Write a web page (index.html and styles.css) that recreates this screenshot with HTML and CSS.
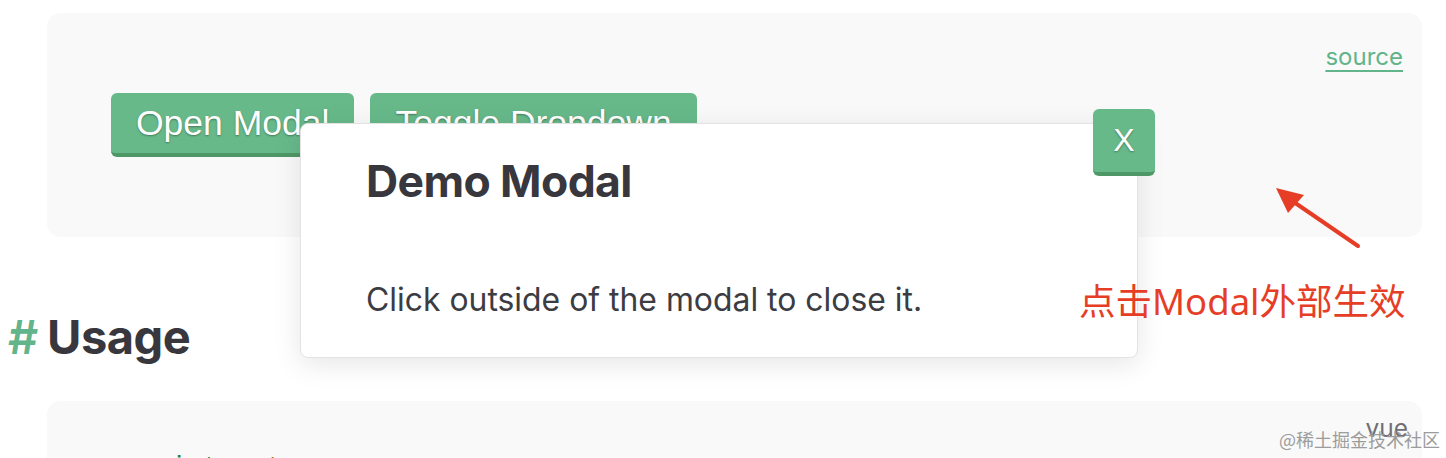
FILE: index.html
```html
<!DOCTYPE html>
<html lang="zh">
<head>
<meta charset="utf-8">
<title>Modal demo</title>
<link rel="stylesheet" href="styles.css">
</head>
<body>
<div class="page">
  <div class="demo">
    <div class="source-row"><a class="source" href="#">source</a></div>
    <div class="btn-row">
      <button class="btn">Open Modal</button>
      <button class="btn">Toggle Dropdown</button>
    </div>
    <div class="modal">
      <h3 class="modal-title">Demo Modal</h3>
      <p class="modal-body">Click outside of the modal to close it.</p>
      <button class="btn close">X</button>
    </div>
    <svg class="arrow" width="120" height="90" viewBox="0 0 120 90">
      <line x1="110" y1="70" x2="40" y2="22" stroke="#e63e26" stroke-width="4" stroke-linecap="round"/>
      <polygon points="28,12 56,19 40,37" fill="#e63e26"/>
    </svg>
    <div class="note">点击Modal外部生效</div>
  </div>
  <h2 class="heading"><span class="hash">#</span>Usage</h2>
  <div class="code-box">
    <span class="lang">vue</span>
    <pre class="code"><span class="tag">&lt;script</span> <span class="attr">setup</span><span class="tag">&gt;</span></pre>
  </div>
</div>
<div class="watermark">@稀土掘金技术社区</div>
</body>
</html>
```
FILE: styles.css
```css
html, body {
  margin: 0;
  padding: 0;
  background: #ffffff;
  overflow: hidden;
}
body {
  font-family: Inter, "Noto Sans", "Noto Sans CJK SC", sans-serif;
  color: #3c3c43;
  width: 1446px;
  height: 458px;
  position: relative;
}
.page {
  padding: 13px 24px 0 47px;
}
.demo {
  position: relative;
  height: 224px;
  box-sizing: border-box;
  background: #f9f9f9;
  border-radius: 14px;
  padding: 30px 19px 0 64px;
}
.source-row {
  display: flex;
  justify-content: flex-end;
  height: 50px;
}
.source {
  font-size: 24px;
  line-height: 28px;
  color: #62b48a;
  text-decoration: underline;
  text-decoration-thickness: 2px;
  text-underline-offset: 5px;
}
.btn-row {
  display: flex;
  gap: 16px;
}
.btn {
  font-family: "Liberation Sans", Arial, sans-serif;
  font-size: 35.5px;
  color: #ffffff;
  background: #67b98a;
  border: none;
  border-bottom: 4px solid #4f9766;
  border-radius: 6px;
  height: 64px;
  padding: 0 25px;
  text-shadow: 0 1px 2px rgba(0, 0, 0, 0.35);
  cursor: pointer;
}
.modal {
  position: absolute;
  left: 253px;
  top: 110px;
  width: 838px;
  height: 235px;
  box-sizing: border-box;
  background: #ffffff;
  border: 1px solid #e3e3e3;
  border-radius: 8px;
  box-shadow: 0 6px 28px rgba(0, 0, 0, 0.10);
  padding: 29px 40px 0 65px;
  z-index: 2;
}
.modal-title {
  margin: 0;
  font-size: 44.5px;
  line-height: 56px;
  font-weight: 700;
  color: #37373d;
  letter-spacing: -0.6px;
}
.modal-body {
  margin: 71px 0 0;
  font-size: 31.9px;
  line-height: 40px;
  color: #3c3c43;
}
.close {
  position: absolute;
  left: 792px;
  top: -15px;
  width: 62px;
  height: 67px;
  padding: 0;
  font-size: 32px;
}
.arrow {
  position: absolute;
  left: 1201px;
  top: 163px;
  z-index: 3;
}
.note {
  position: absolute;
  left: 1032px;
  top: 264px;
  font-family: "Noto Sans", "Noto Sans CJK SC", sans-serif;
  font-size: 36.5px;
  line-height: 48px;
  color: #e63e26;
  white-space: nowrap;
  z-index: 3;
}
.heading {
  display: flex;
  align-items: baseline;
  margin: 72px 0 0 -39px;
  font-size: 47px;
  line-height: 56px;
  font-weight: 700;
  color: #37373d;
  letter-spacing: -0.5px;
}
.hash {
  color: #62b48a;
  width: 39px;
  font-weight: 600;
}
.code-box {
  position: relative;
  margin-top: 36px;
  height: 200px;
  background: #f9f9f9;
  border-radius: 14px;
  padding: 46px 0 0 60px;
  box-sizing: border-box;
}
.lang {
  position: absolute;
  right: 14px;
  top: 12px;
  font-size: 24.5px;
  color: #6f6f75;
}
.code {
  margin: 0;
  font-family: "Liberation Mono", "DejaVu Sans Mono", monospace;
  font-size: 26.6px;
  line-height: 40px;
}
.tag { color: #22863a; }
.attr { color: #b76b01; }
.watermark {
  position: absolute;
  right: 6px;
  bottom: 6px;
  font-family: "Noto Sans CJK SC", sans-serif;
  font-size: 18px;
  color: #9c9c9c;
  z-index: 5;
}
```
